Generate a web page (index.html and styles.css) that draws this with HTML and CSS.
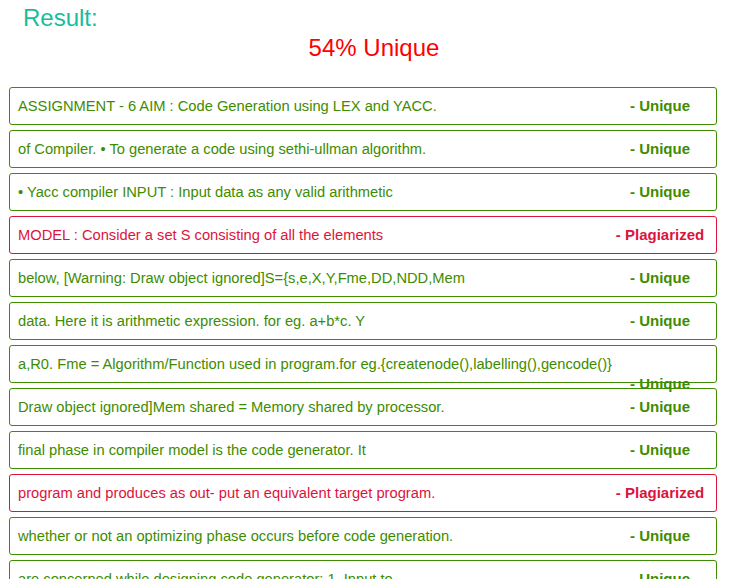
FILE: index.html
```html
<!DOCTYPE html>
<html>
<head>
<meta charset="utf-8">
<link rel="stylesheet" href="styles.css">
</head>
<body>
<div class="page">
  <h3 class="result">Result:</h3>
  <h3 class="score">54% Unique</h3>
  <div class="list">
    <div class="row unique">ASSIGNMENT - 6 AIM : Code Generation using LEX and YACC. <span class="tag">- Unique</span></div>
    <div class="row unique">of Compiler. • To generate a code using sethi-ullman algorithm. <span class="tag">- Unique</span></div>
    <div class="row unique">• Yacc compiler INPUT : Input data as any valid arithmetic <span class="tag">- Unique</span></div>
    <div class="row plag">MODEL : Consider a set S consisting of all the elements <span class="tag">- Plagiarized</span></div>
    <div class="row unique">below, [Warning: Draw object ignored]S={s,e,X,Y,Fme,DD,NDD,Mem <span class="tag">- Unique</span></div>
    <div class="row unique">data. Here it is arithmetic expression. for eg. a+b*c. Y <span class="tag">- Unique</span></div>
    <div class="row unique">a,R0. Fme = Algorithm/Function used in program.for eg.{createnode(),labelling(),gencode()} <span class="tag">- Unique</span></div>
    <div class="row unique">Draw object ignored]Mem shared = Memory shared by processor. <span class="tag">- Unique</span></div>
    <div class="row unique">final phase in compiler model is the code generator. It <span class="tag">- Unique</span></div>
    <div class="row plag">program and produces as out- put an equivalent target program. <span class="tag">- Plagiarized</span></div>
    <div class="row unique">whether or not an optimizing phase occurs before code generation. <span class="tag">- Unique</span></div>
    <div class="row unique">are concerned while designing code generator: 1. Input to <span class="tag">- Unique</span></div>
    <div class="row unique">the code generator 2. Target program 3. Memory management <span class="tag">- Unique</span></div>
  </div>
</div>
</body>
</html>
```
FILE: styles.css
```css
html, body {
  margin: 0;
  padding: 0;
  background: #ffffff;
}
body {
  font-family: "Liberation Sans", Arial, sans-serif;
}
.page {
  padding: 4px 0 0 8px;
}
.result {
  margin: 0;
  padding-left: 15px;
  font-size: 24px;
  line-height: 28px;
  font-weight: normal;
  color: #1abc9c;
}
.score {
  margin: 2px 0 0 0;
  width: 713px;
  padding-left: 19px;
  box-sizing: border-box;
  text-align: center;
  font-size: 24px;
  line-height: 28px;
  font-weight: normal;
  color: #ff0000;
}
.list {
  margin: 25px 0 0 1px;
  width: 708px;
}
.row {
  box-sizing: border-box;
  border: 1px solid;
  border-radius: 3px;
  padding: 8px;
  margin-bottom: 5px;
  font-size: 14.7px;
  line-height: 20px;
}
.row.unique {
  color: #3e8c00;
  border-color: #3e8c00;
}
.row.plag {
  color: #dc143c;
  border-color: #dc143c;
}
.tag {
  float: right;
  width: 110px;
  margin-right: -7px;
  text-align: center;
  font-weight: bold;
  font-size: 15px;
}
```
